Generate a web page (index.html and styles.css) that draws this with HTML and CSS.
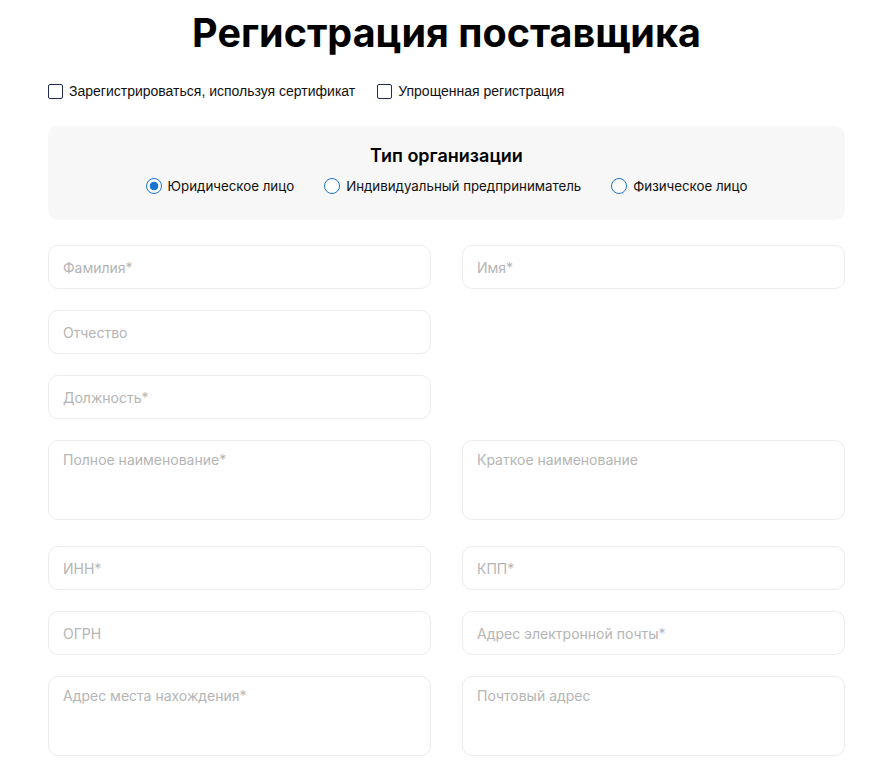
FILE: index.html
```html
<!DOCTYPE html>
<html lang="ru">
<head>
  <meta charset="UTF-8" />
  <title>Регистрация поставщика</title>
  <link rel="stylesheet" href="styles.css">
</head>
<body>
  <div class="page">
    <h1>Регистрация поставщика</h1>

    <!-- режим регистрации -->
    <div class="options">
      <label class="check"><input type="checkbox" /> Зарегистрироваться, используя сертификат</label>
      <label class="check"><input type="checkbox" /> Упрощенная регистрация</label>
    </div>

    <!-- тип организации -->
    <div class="org-type">
      <h2>Тип организации</h2>
      <div class="radios">
        <label class="radio"><input type="radio" name="org" checked /> Юридическое лицо</label>
        <label class="radio"><input type="radio" name="org" /> Индивидуальный предприниматель</label>
        <label class="radio"><input type="radio" name="org" /> Физическое лицо</label>
      </div>
    </div>

    <!-- поля формы -->
    <form class="fields">
      <input class="field" placeholder="Фамилия*" />
      <input class="field" placeholder="Имя*" />
      <input class="field" placeholder="Отчество" />
      <div></div>
      <input class="field" placeholder="Должность*" />
      <div></div>
      <textarea class="field area" placeholder="Полное наименование*"></textarea>
      <textarea class="field area" placeholder="Краткое наименование"></textarea>
      <input class="field" placeholder="ИНН*" />
      <input class="field" placeholder="КПП*" />
      <input class="field" placeholder="ОГРН" />
      <input class="field" placeholder="Адрес электронной почты*" />
      <textarea class="field area" placeholder="Адрес места нахождения*"></textarea>
      <textarea class="field area" placeholder="Почтовый адрес"></textarea>
    </form>
  </div>
</body>
</html>
```

FILE: styles.css
```css
body {
  margin: 0;
  font-family: Inter, "Noto Sans", sans-serif;
  color: #000;
  background: #fff;
}

.page {
  width: 797px;
  margin-left: 48px;
}

h1 {
  font-size: 39.5px;
  font-weight: 700;
  text-align: center;
  margin: 0;
  padding-top: 10px;
  line-height: 46px;
}

.options {
  display: flex;
  gap: 22px;
  margin-top: 27px;
}

.check {
  display: flex;
  align-items: center;
  font-family: "Liberation Sans", Arial, sans-serif;
  font-size: 14px;
  color: #111;
}

.check input {
  appearance: none;
  width: 15px;
  height: 15px;
  margin: 0 6px 0 0;
  border: 1px solid #1f2a55;
  border-radius: 2px;
  background: #fff;
}

.org-type {
  margin-top: 27px;
  background-color: #f7f7f7;
  border-radius: 10px;
  height: 94px;
  box-sizing: border-box;
  padding-top: 19px;
  text-align: center;
}

h2 {
  font-size: 18px;
  font-weight: 600;
  margin: 0;
  line-height: 22px;
}

.radios {
  display: flex;
  justify-content: center;
  gap: 30px;
  margin-top: 11px;
}

.radio {
  display: flex;
  align-items: center;
  font-size: 13.3px;
  color: #111;
}

.radio input {
  appearance: none;
  width: 16px;
  height: 16px;
  margin: 0 6px 0 0;
  border: 1.5px solid #1976d2;
  border-radius: 50%;
  background: #fff;
  box-sizing: border-box;
}

.radio input:checked {
  background: radial-gradient(circle, #1976d2 0 4px, #fff 4.6px);
}

.fields {
  display: grid;
  grid-template-columns: 1fr 1fr;
  column-gap: 31px;
  row-gap: 21px;
  margin-top: 25px;
}

.field {
  height: 44px;
  box-sizing: border-box;
  border: 1px solid #ececec;
  border-radius: 10px;
  padding: 0 14px;
  font-family: Inter, "Noto Sans", sans-serif;
  font-size: 14px;
  background: #fff;
  outline: none;
}

.field::placeholder {
  color: #b5b5b5;
}

.area {
  height: 80px;
  padding-top: 10px;
  resize: none;
  margin-bottom: 5px;
}
```
